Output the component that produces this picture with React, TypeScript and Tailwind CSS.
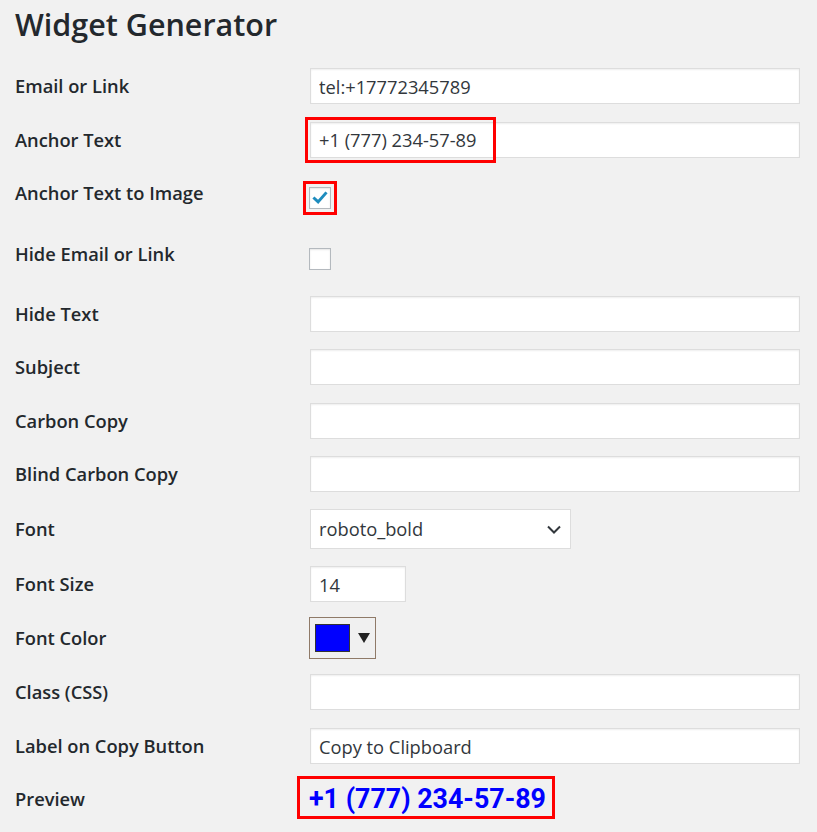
import { FC, ReactNode } from "react";

const labelClass = "text-[18.3px] font-semibold text-[#23282d]";
const fieldBase =
  "h-[36px] border border-[#dddddd] bg-white px-[8px] text-[18.3px] text-[#32373c] shadow-[inset_0_1px_2px_rgba(0,0,0,0.07)] outline-none";

interface RowProps {
  label: string;
  h: string;
  children?: ReactNode;
}

const Row: FC<RowProps> = ({ label, h, children }) => (
  <div className={`grid grid-cols-[295px_1fr] items-center ${h}`}>
    <div className={labelClass}>{label}</div>
    <div className="flex items-center">{children}</div>
  </div>
);

const Highlight: FC<{ className: string }> = ({ className }) => (
  <span
    aria-hidden
    className={`pointer-events-none absolute border-[3px] border-[#ff0000] ${className}`}
  />
);

const Checkbox: FC<{ checked?: boolean }> = ({ checked }) => (
  <span className="relative mt-[9px] ml-[-1px] flex h-[22px] w-[22px] items-center justify-center border border-[#b4b9be] bg-white shadow-[inset_0_1px_2px_rgba(0,0,0,0.1)]">
    {checked && (
      <svg viewBox="0 0 20 20" className="h-[20px] w-[20px]">
        <path
          d="M4.5 10.5l3.6 3.4 7.4-8.4"
          fill="none"
          stroke="#1e8cbe"
          strokeWidth="3"
          strokeLinecap="square"
        />
      </svg>
    )}
  </span>
);

const TextField: FC<{ value?: string }> = ({ value = "" }) => (
  <input className={`${fieldBase} w-full`} defaultValue={value} readOnly />
);

export default function App() {
  return (
    <div className="min-h-[832px] bg-[#f1f1f1] pl-[15px] pr-[17px] font-['Open_Sans','Noto_Sans',sans-serif]">
      <h1 className="flex h-[59px] items-center pb-[10px] text-[30.5px] font-semibold text-[#23282d]">
        Widget Generator
      </h1>

      <Row label="Email or Link" h="h-[54px]">
        <TextField value="tel:+17772345789" />
      </Row>

      <Row label="Anchor Text" h="h-[53px]">
        <div className="relative w-full">
          <TextField value="+1 (777) 234-57-89" />
          <Highlight className="left-[-5px] top-[-5px] h-[46px] w-[191px]" />
        </div>
      </Row>

      <Row label="Anchor Text to Image" h="h-[54px]">
        <div className="relative">
          <Checkbox checked />
          <Highlight className="left-[-7px] top-[3px] h-[34px] w-[34px]" />
        </div>
      </Row>

      <Row label="Hide Email or Link" h="h-[68px]">
        <Checkbox />
      </Row>

      <Row label="Hide Text" h="h-[51px]">
        <TextField />
      </Row>

      <Row label="Subject" h="h-[56px]">
        <TextField />
      </Row>

      <Row label="Carbon Copy" h="h-[51px]">
        <TextField />
      </Row>

      <Row label="Blind Carbon Copy" h="h-[56px]">
        <TextField />
      </Row>

      <Row label="Font" h="h-[53px]">
        <div className="flex h-[40px] w-[261px] items-center justify-between border border-[#dddddd] bg-white pl-[8px] pr-[8px] text-[18.3px] text-[#32373c]">
          <span>roboto_bold</span>
          <svg viewBox="0 0 16 16" className="h-[16px] w-[16px]">
            <path d="M2 5.5l6 6 6-6" fill="none" stroke="#32373c" strokeWidth="2" />
          </svg>
        </div>
      </Row>

      <Row label="Font Size" h="h-[58px]">
        <input className={`${fieldBase} w-[96px]`} defaultValue="14" readOnly />
      </Row>

      <Row label="Font Color" h="h-[49px]">
        <div className="ml-[-1px] flex h-[42px] w-[67px] items-center gap-[8px] border border-[#8f7a68] bg-[#f0f0f0] pl-[5px]">
          <span className="h-[28px] w-[35px] border border-[#333] bg-[#0000ff]" />
          <svg viewBox="0 0 12 10" className="h-[10px] w-[12px]">
            <path d="M0 0h12L6 10z" fill="#222" />
          </svg>
        </div>
      </Row>

      <Row label="Class (CSS)" h="h-[60px]">
        <TextField />
      </Row>

      <Row label="Label on Copy Button" h="h-[48px]">
        <TextField value="Copy to Clipboard" />
      </Row>

      <Row label="Preview" h="h-[58px]">
        <div className="relative ml-[-1px]">
          <span className="font-['Roboto',sans-serif] text-[26.8px] font-bold text-[#0000ff]">
            +1 (777) 234-57-89
          </span>
          <Highlight className="left-[-12px] top-[-3px] h-[43px] w-[258px]" />
        </div>
      </Row>
    </div>
  );
}
